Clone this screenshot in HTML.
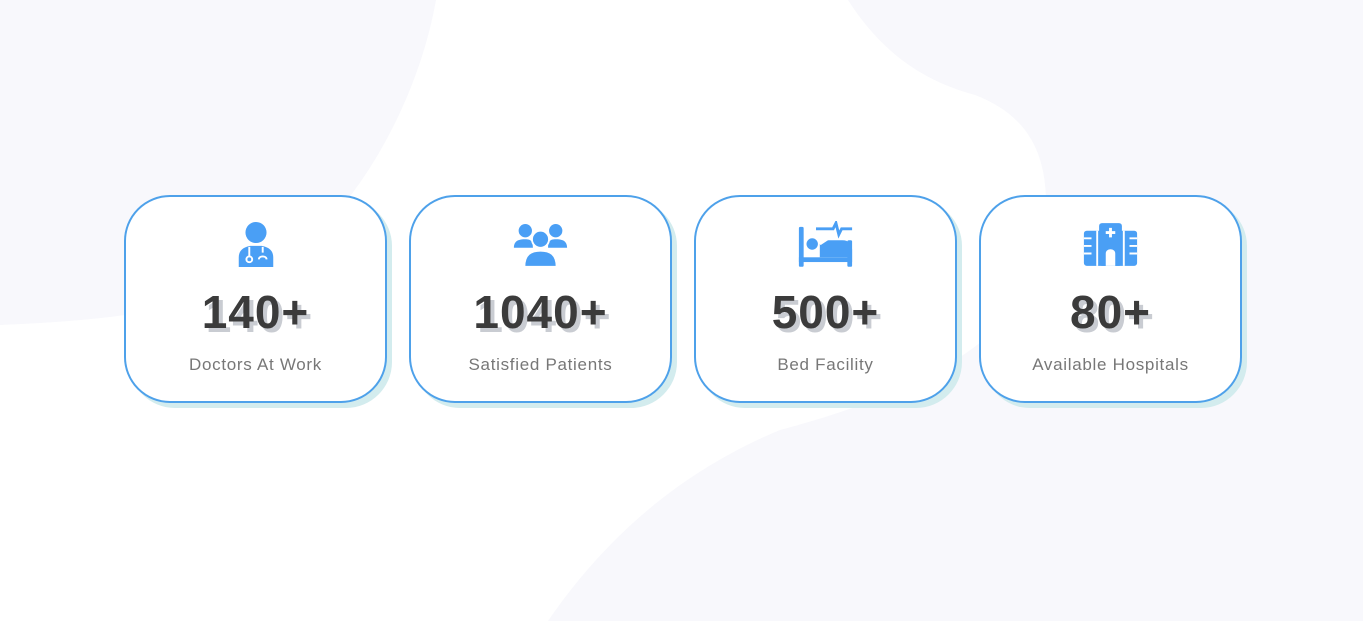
<!DOCTYPE html>
<html><head><style>
html,body{margin:0;padding:0;width:1363px;height:621px;overflow:hidden;background:#fff;font-family:"Liberation Sans",sans-serif}
.bg{position:absolute;left:0;top:0}
.card{position:absolute;top:195px;width:259px;height:204px;border:2px solid #4ea1ea;border-radius:46px;background:#fff;box-shadow:5px 5px 0 #d3ecee;text-align:center}
.icon{position:absolute;left:0;right:0;top:24px;height:46px}
.num{position:absolute;left:0;right:0;top:88px;font-size:46px;font-weight:bold;color:#3b3b3b;text-shadow:4px 4px 0 #c9ccd2;letter-spacing:1px}
.lab{position:absolute;left:0;right:0;top:158px;font-size:17px;color:#777;letter-spacing:.7px}
</style></head><body>
<svg class="bg" width="1363" height="621">
<path d="M0 0 L436 0 C420 90 370 190 300 250 C220 310 120 320 0 325 Z" fill="#f8f8fc"/>
<path d="M848 0 C880 50 920 80 975 95 C1040 120 1050 170 1045 230 C1040 330 930 390 780 430 C660 480 590 560 548 621 L1363 621 L1363 0 Z" fill="#f8f8fc"/>
</svg>

<div class="card" style="left:124px">
<svg class="icon" viewBox="0 0 48 48" width="46" height="46" style="margin:0 auto"><circle cx="24" cy="12" r="11" fill="#4a9ff5"/><path d="M6 48 V38 C6 30 12 27 18 26 L30 26 C36 27 42 30 42 38 V48 Z" fill="#4a9ff5"/><circle cx="17" cy="40" r="3" fill="none" stroke="#fff" stroke-width="2"/><path d="M17 37 V27 M31 27 V33 M27 40 C27 36 35 36 35 40" fill="none" stroke="#fff" stroke-width="2"/></svg>
<div class="num">140+</div><div class="lab">Doctors At Work</div></div>

<div class="card" style="left:409px">
<svg class="icon" viewBox="0 0 60 48" width="57" height="46" style="margin:0 auto"><circle cx="14" cy="10" r="7" fill="#4a9ff5"/><circle cx="46" cy="10" r="7" fill="#4a9ff5"/><path d="M2 28 C2 20 8 19 14 19 C20 19 22 21 22 28 Z M38 28 C38 21 40 19 46 19 C52 19 58 20 58 28 Z" fill="#4a9ff5"/><circle cx="30" cy="19" r="9" fill="#4a9ff5" stroke="#fff" stroke-width="2"/><path d="M13 48 C13 35 20 31 30 31 C40 31 47 35 47 48 Z" fill="#4a9ff5" stroke="#fff" stroke-width="2"/></svg>
<div class="num">1040+</div><div class="lab">Satisfied Patients</div></div>

<div class="card" style="left:694px">
<svg class="icon" viewBox="0 0 60 48" width="57" height="46" style="margin:0 auto"><rect x="2" y="6" width="5" height="42" rx="1.5" fill="#4a9ff5"/><rect x="53" y="20" width="5" height="28" rx="1.5" fill="#4a9ff5"/><rect x="2" y="38" width="56" height="5" fill="#4a9ff5"/><circle cx="16" cy="24" r="6" fill="#4a9ff5"/><path d="M24 38 V24 L32 20 L48 20 C54 20 58 24 58 30 V38 Z" fill="#4a9ff5"/><path d="M20 8 H38 L41 2 L44 14 L47 8 H58" fill="none" stroke="#4a9ff5" stroke-width="3"/><path d="M24 24 L33 18" stroke="#fff" stroke-width="3"/></svg>
<div class="num">500+</div><div class="lab">Bed Facility</div></div>

<div class="card" style="left:979px">
<svg class="icon" viewBox="0 0 60 48" width="57" height="46" style="margin:0 auto"><rect x="2" y="10" width="56" height="37" rx="3" fill="#4a9ff5"/><rect x="18" y="2" width="24" height="45" rx="3" fill="#4a9ff5"/><path d="M2 18 H10 M2 26 H10 M2 34 H10 M50 18 H58 M50 26 H58 M50 34 H58" stroke="#fff" stroke-width="2"/><path d="M16 10 V47 M44 10 V47" stroke="#fff" stroke-width="2"/><path d="M30 7 V17 M25 12 H35" stroke="#fff" stroke-width="3"/><path d="M25 47 V34 C25 28 35 28 35 34 V47 Z" fill="#fff"/></svg>
<div class="num">80+</div><div class="lab">Available Hospitals</div></div>
</body></html>
